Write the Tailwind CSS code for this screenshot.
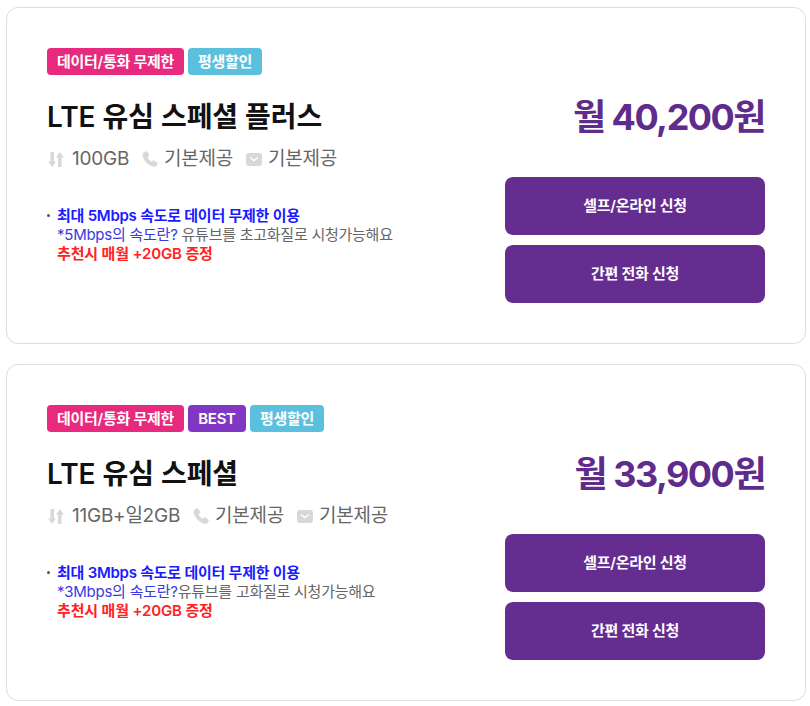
<!DOCTYPE html>
<html lang="ko">
<head>
  <meta charset="UTF-8">
  <meta name="viewport" content="width=device-width, initial-scale=1.0">
  <title>LTE 유심 요금제</title>
  <script src="https://cdn.jsdelivr.net/npm/@tailwindcss/browser@4"></script>
</head>
<body class="bg-white font-['Inter','Noto_Sans_CJK_KR',sans-serif] overflow-hidden">
  <main class="w-[810px] pt-[7px] pl-1.5 flex flex-col gap-5">

    <!-- Plan 1 -->
    <section class="w-[800px] h-[337px] border border-[#dddddd] rounded-xl pl-10 pr-10 pt-10 bg-white">
      <div class="flex gap-1 h-[27px]">
        <span class="h-[27px] w-[137px] pt-px rounded bg-[#e72a7d] text-white text-[15px] font-semibold flex items-center justify-center tracking-[-0.3px]">데이터/통화 무제한</span>
        <span class="h-[27px] w-[74px] pt-px rounded bg-[#5bc0de] text-white text-[15px] font-semibold flex items-center justify-center tracking-[-0.3px]">평생할인</span>
      </div>
      <div class="flex justify-between mt-[22px]">
        <div class="w-[440px]">
          <h2 class="text-[28px] leading-[40px] font-semibold text-[#111111] h-[40px] tracking-[-0.05px]">LTE 유심 스페셜 플러스</h2>
          <div class="flex items-center mt-[9px] h-[26px] text-[19px] tracking-[-0.25px] text-[#666666]">
            <svg class="w-4 h-[15px] ml-px mr-2" viewBox="0 0 16 15" fill="#d8d8d8"><path d="M2.500 0h3.500v9.500h2L4.200 15 0 9.500h2.500zM10 15h3.500V5.500H16L11.800 0 8 5.500h2z"/></svg>
            <span>100GB</span>
            <svg class="w-4 h-4 ml-[13px] mr-[6px]" viewBox="0 0 16 16" fill="#d8d8d8"><path d="M1.500 1.500 5 0l2.500 4.500L5.500 6c.5 1.800 2.500 4 4.300 4.800L11.300 9 16 12l-1.500 3c-1 1-2.600 1.200-4.300.3C5.500 13.500 2 9.500.8 5.500.4 4 .7 2.500 1.500 1.500z"/></svg>
            <span>기본제공</span>
            <svg class="w-4 h-[13px] ml-[13px] mr-[6px]" viewBox="0 0 16 13"><rect width="16" height="13" rx="3" fill="#d8d8d8"/><path d="M4 4.500 8 7.500l4-3" fill="none" stroke="#fff" stroke-width="1.500"/></svg>
            <span>기본제공</span>
          </div>
          <div class="flex mt-[34px] text-[15px] leading-[19px] tracking-[-0.25px]">
            <span class="w-[3px] h-[3px] rounded-full bg-[#555555] mt-2 mr-[7px]"></span>
            <div>
              <p class="font-semibold text-[#1a1aff]">최대 5Mbps 속도로 데이터 무제한 이용</p>
              <p><span class="text-[#3a3ae0]">*5Mbps의 속도란?</span> <span class="text-[#666666]">유튜브를 초고화질로 시청가능해요</span></p>
              <p class="font-semibold text-[#ff2222] tracking-[-0.15px]">추천시 매월 +20GB 증정</p>
            </div>
          </div>
        </div>
        <div class="w-[260px] flex flex-col">
          <p class="text-right text-[36px] leading-[40px] h-[40px] font-bold text-[#5f2b8c] tracking-[-1.5px]">월 40,200원</p>
          <a class="mt-[40px] h-[58px] pt-px rounded-lg bg-[#662d91] text-white text-[15px] font-semibold tracking-[-0.3px] flex items-center justify-center">셀프/온라인 신청</a>
          <a class="mt-2.5 h-[58px] pt-px rounded-lg bg-[#662d91] text-white text-[15px] font-semibold tracking-[-0.3px] flex items-center justify-center">간편 전화 신청</a>
        </div>
      </div>
    </section>

    <!-- Plan 2 -->
    <section class="w-[800px] h-[337px] border border-[#dddddd] rounded-xl pl-10 pr-10 pt-10 bg-white">
      <div class="flex gap-1 h-[27px]">
        <span class="h-[27px] w-[137px] pt-px rounded bg-[#e72a7d] text-white text-[15px] font-semibold flex items-center justify-center tracking-[-0.3px]">데이터/통화 무제한</span>
        <span class="h-[27px] w-[58px] pt-px rounded bg-[#8038c4] text-white text-[15px] font-semibold flex items-center justify-center tracking-[-0.3px]">BEST</span>
        <span class="h-[27px] w-[74px] pt-px rounded bg-[#5bc0de] text-white text-[15px] font-semibold flex items-center justify-center tracking-[-0.3px]">평생할인</span>
      </div>
      <div class="flex justify-between mt-[22px]">
        <div class="w-[440px]">
          <h2 class="text-[28px] leading-[40px] font-semibold text-[#111111] h-[40px] tracking-[-0.05px]">LTE 유심 스페셜</h2>
          <div class="flex items-center mt-[9px] h-[26px] text-[19px] tracking-[-0.25px] text-[#666666]">
            <svg class="w-4 h-[15px] ml-px mr-2" viewBox="0 0 16 15" fill="#d8d8d8"><path d="M2.500 0h3.500v9.500h2L4.200 15 0 9.500h2.500zM10 15h3.500V5.500H16L11.800 0 8 5.500h2z"/></svg>
            <span>11GB+일2GB</span>
            <svg class="w-4 h-4 ml-[13px] mr-[6px]" viewBox="0 0 16 16" fill="#d8d8d8"><path d="M1.500 1.500 5 0l2.500 4.500L5.500 6c.5 1.800 2.500 4 4.300 4.800L11.300 9 16 12l-1.500 3c-1 1-2.600 1.200-4.300.3C5.500 13.500 2 9.500.8 5.500.4 4 .7 2.500 1.500 1.500z"/></svg>
            <span>기본제공</span>
            <svg class="w-4 h-[13px] ml-[13px] mr-[6px]" viewBox="0 0 16 13"><rect width="16" height="13" rx="3" fill="#d8d8d8"/><path d="M4 4.500 8 7.500l4-3" fill="none" stroke="#fff" stroke-width="1.500"/></svg>
            <span>기본제공</span>
          </div>
          <div class="flex mt-[34px] text-[15px] leading-[19px] tracking-[-0.25px]">
            <span class="w-[3px] h-[3px] rounded-full bg-[#555555] mt-2 mr-[7px]"></span>
            <div>
              <p class="font-semibold text-[#1a1aff]">최대 3Mbps 속도로 데이터 무제한 이용</p>
              <p><span class="text-[#3a3ae0]">*3Mbps의 속도란?</span><span class="text-[#666666]">유튜브를 고화질로 시청가능해요</span></p>
              <p class="font-semibold text-[#ff2222] tracking-[-0.15px]">추천시 매월 +20GB 증정</p>
            </div>
          </div>
        </div>
        <div class="w-[260px] flex flex-col">
          <p class="text-right text-[36px] leading-[40px] h-[40px] font-bold text-[#5f2b8c] tracking-[-1.5px]">월 33,900원</p>
          <a class="mt-[40px] h-[58px] pt-px rounded-lg bg-[#662d91] text-white text-[15px] font-semibold tracking-[-0.3px] flex items-center justify-center">셀프/온라인 신청</a>
          <a class="mt-2.5 h-[58px] pt-px rounded-lg bg-[#662d91] text-white text-[15px] font-semibold tracking-[-0.3px] flex items-center justify-center">간편 전화 신청</a>
        </div>
      </div>
    </section>

  </main>
</body>
</html>
